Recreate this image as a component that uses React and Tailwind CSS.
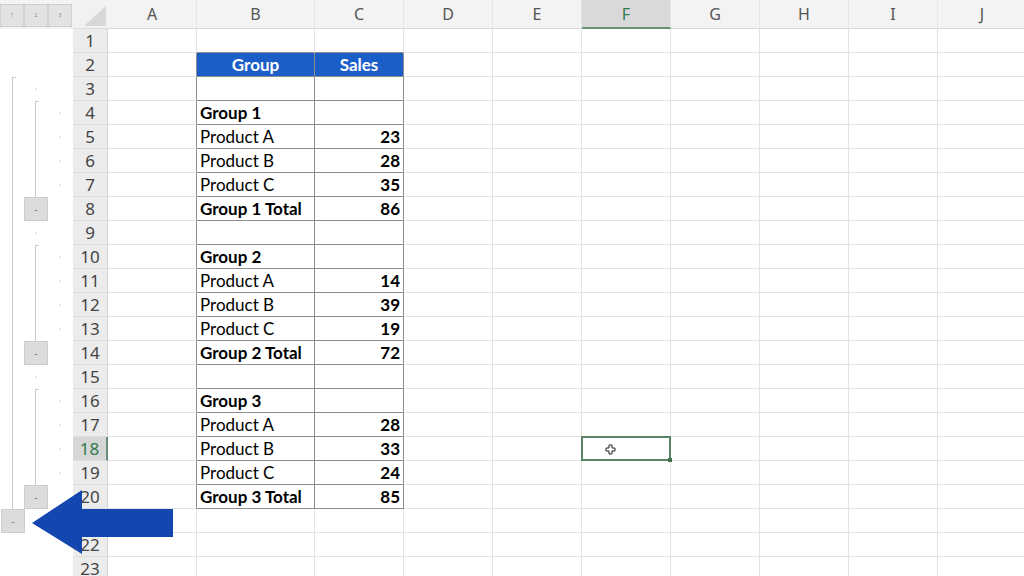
import React from 'react';

const COLS = [
  { key: 'A', w: 89 },
  { key: 'B', w: 118 },
  { key: 'C', w: 89 },
  { key: 'D', w: 89 },
  { key: 'E', w: 89 },
  { key: 'F', w: 89 },
  { key: 'G', w: 89 },
  { key: 'H', w: 89 },
  { key: 'I', w: 89 },
  { key: 'J', w: 89 },
];

// table contents: row -> [B, C, bold]
const DATA = {
  4: ['Group 1', '', true],
  5: ['Product A', '23', false],
  6: ['Product B', '28', false],
  7: ['Product C', '35', false],
  8: ['Group 1 Total', '86', true],
  10: ['Group 2', '', true],
  11: ['Product A', '14', false],
  12: ['Product B', '39', false],
  13: ['Product C', '19', false],
  14: ['Group 2 Total', '72', true],
  16: ['Group 3', '', true],
  17: ['Product A', '28', false],
  18: ['Product B', '33', false],
  19: ['Product C', '24', false],
  20: ['Group 3 Total', '85', true],
};

const ROWS = Array.from({ length: 23 }, (_, i) => i + 1);

const OutlineButton = ({ className = '' }) => (
  <div className={`w-[24px] h-[24px] bg-[#dcdcdc] border border-[#cdcdcd] flex items-center justify-center text-[9px] leading-none text-[#666] ${className}`}>
    -
  </div>
);

const Dot = ({ className = '' }) => (
  <div className={`h-full flex items-center ${className}`}>
    <div className="w-[2px] h-[2px] rounded-full bg-[#dedede]" />
  </div>
);

// level 1 strip: rows 3..20 line, button at 21
const Level1 = ({ r }) => {
  if (r === 3) return <div className="ml-[12px] h-full w-[4px] border-l border-t border-[#cacaca]" />;
  if (r > 3 && r <= 20) return <div className="ml-[12px] h-full border-l border-[#cacaca]" />;
  if (r === 21) return <OutlineButton className="ml-[1px]" />;
  return null;
};

const Level2 = ({ r }) => {
  const starts = [4, 10, 16];
  const buttons = [8, 14, 20];
  if (buttons.includes(r)) return <OutlineButton />;
  if (starts.includes(r)) return <div className="ml-[11px] h-full w-[4px] border-l border-t border-[#cacaca]" />;
  if ((r > 4 && r < 8) || (r > 10 && r < 14) || (r > 16 && r < 20))
    return <div className="ml-[11px] h-full border-l border-[#cacaca]" />;
  if (r === 3 || r === 9 || r === 15) return <Dot className="ml-[11px]" />;
  return null;
};

const Level3 = ({ r }) => {
  if ((r >= 4 && r <= 7) || (r >= 10 && r <= 13) || (r >= 16 && r <= 19)) return <Dot className="ml-[11px]" />;
  return null;
};

const Cell = ({ r, col }) => {
  const inTable = r >= 2 && r <= 20;
  const rightDark = inTable && (col.key === 'A' || col.key === 'B' || col.key === 'C');
  const bottomDark = (col.key === 'B' || col.key === 'C') && r >= 1 && r <= 20;
  const rc = rightDark ? 'border-r-[#8e8e8e]' : 'border-r-[#e3e3e3]';
  const bc = bottomDark ? 'border-b-[#8e8e8e]' : 'border-b-[#e3e3e3]';
  const isHeader = r === 2 && (col.key === 'B' || col.key === 'C');
  const selected = r === 18 && col.key === 'F';

  let content = null;
  if (isHeader) {
    content = (
      <span className="w-full text-center font-bold text-white text-[17px]">
        {col.key === 'B' ? 'Group' : 'Sales'}
      </span>
    );
  } else if (DATA[r] && col.key === 'B') {
    content = (
      <span className={`pl-[3px] text-[17px] text-black ${DATA[r][2] ? 'font-bold' : ''}`}>{DATA[r][0]}</span>
    );
  } else if (DATA[r] && col.key === 'C') {
    content = <span className="w-full text-right pr-[3px] text-[17px] font-bold text-black">{DATA[r][1]}</span>;
  }

  return (
    <div
      className={`relative shrink-0 h-full box-border border-r border-b ${rc} ${bc} flex items-center pt-[1px] ${isHeader ? 'bg-[#1c5ec8]' : 'bg-white'}`}
      style={{ width: col.w }}
    >
      {content}
      {selected && (
        <div className="absolute -left-[1px] -top-[1px] w-[90px] h-[25px] border-2 border-[#5a8467] z-10">
          <svg className="absolute left-[22px] top-[6px]" width="11" height="11" viewBox="0 0 11 11">
            <path d="M4 1h3v3h3v3H7v3H4V7H1V4h3z" fill="#fff" stroke="#222" strokeWidth="1" />
          </svg>
          <div className="absolute -right-[3px] -bottom-[3px] w-[4px] h-[4px] bg-[#3d6e4e]" />
        </div>
      )}
    </div>
  );
};

export default function App() {
  return (
    <div className="w-[1024px] h-[576px] overflow-hidden bg-white relative" style={{ fontFamily: 'Lato, "Liberation Sans", sans-serif' }}>
      {/* Column header strip */}
      <div className="flex h-[29px] bg-[#f3f3f3]">
        <div className="w-[73px] shrink-0 flex items-start pt-[4px]">
          {['1', '2', '3'].map((n) => (
            <div key={n} className="w-[24px] h-[23px] bg-[#e3e3e3] border border-[#d0d0d0] flex items-center justify-center text-[5px] text-[#888]" style={{ fontFamily: '"Noto Sans", sans-serif' }}>
              {n}
            </div>
          ))}
        </div>
        <div className="w-[35px] shrink-0 relative bg-[#f1f1f1] border-b border-[#dcdcdc]">
          <svg className="absolute right-[2px] bottom-[2px]" width="22" height="20" viewBox="0 0 22 20">
            <polygon points="22,0 22,20 0,20" fill="#d8d8d8" />
          </svg>
        </div>
        {COLS.map((c) => {
          const sel = c.key === 'F';
          return (
            <div
              key={c.key}
              className={`shrink-0 h-full flex items-center justify-center text-[16px] box-border border-r border-[#e6e6e6] ${sel ? 'bg-[#d9d9d9] text-[#2d7a4c] border-b-2 border-b-[#6a8f77]' : 'text-[#555] border-b border-b-[#d6d6d6]'}`}
              style={{ width: c.w, fontFamily: '"Noto Sans", sans-serif' }}
            >
              {c.key}
            </div>
          );
        })}
      </div>

      {/* Rows */}
      {ROWS.map((r) => (
        <div key={r} className="flex h-[24px]">
          <div className="w-[73px] shrink-0 flex bg-white">
            <div className="w-[24px] h-full"><Level1 r={r} /></div>
            <div className="w-[24px] h-full"><Level2 r={r} /></div>
            <div className="w-[25px] h-full"><Level3 r={r} /></div>
          </div>
          <div
            className={`w-[35px] shrink-0 h-full flex items-center justify-center text-[17px] box-border border-b border-b-[#dedede] ${r === 18 ? 'bg-[#d6d6d6] text-[#2d7a4c] border-r-2 border-r-[#6a8f77]' : 'bg-[#ececec] text-[#444] border-r border-r-[#d4d4d4]'}`}
            style={{ fontFamily: '"Noto Sans", sans-serif' }}
          >
            {r}
          </div>
          {COLS.map((c) => (
            <Cell key={c.key} r={r} col={c} />
          ))}
        </div>
      ))}

      {/* Annotation arrow */}
      <svg className="absolute left-[30px] top-[488px]" width="146" height="68" viewBox="30 488 146 68">
        <polygon points="32,523 82,490 82,509 173,509 173,537 82,537 82,554" fill="#1446b0" />
      </svg>
    </div>
  );
}
